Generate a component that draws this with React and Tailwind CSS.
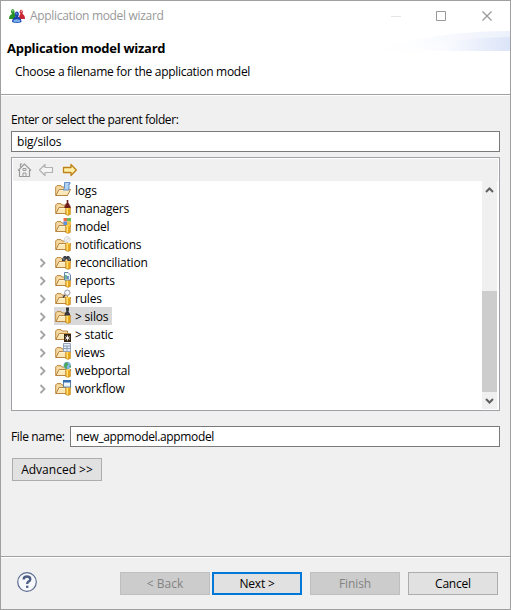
const FONT = "font-['Open_Sans','Noto_Sans',sans-serif]";

function AppIcon() {
  return (
    <svg width="16" height="14" viewBox="0 0 16 14">
      <path d="M0 10Q0 6 3 5L2 3Q2 0 4 0Q6 1 5.500 4Q7 6 6 10Z" fill="#269322" />
      <path d="M10 10Q10 6 11.500 5L10.500 3Q11 0 13 1Q14.500 2 13.500 5Q16 6 16 10Z" fill="#c92433" />
      <circle cx="3.700" cy="1.700" r=".9" fill="#91d98e" />
      <circle cx="12.400" cy="2.300" r=".9" fill="#f3a2a2" />
      <path d="M3 13Q3 9 6.500 7.500Q5 5 6.500 3Q8 1.700 9.500 3.500Q10.500 6 9 7.500Q12.500 9 12.500 13Q8 15 3 13Z" fill="#1b45ae" />
      <ellipse cx="7.800" cy="11.800" rx="3.500" ry="1.500" fill="#79adee" />
      <circle cx="7.500" cy="4.700" r="1" fill="#638bd4" />
    </svg>
  );
}

const BADGES = {
  logs: (
    <path d="M9.500 .500h5.500v1.500h-1v6H8q1.800-1 1.500-4z" fill="#b4d3f4" stroke="#5585bd" strokeWidth=".9" />
  ),
  managers: <path d="M10.500 5.500V4L11.700 3V0H13.300V3L14.500 4V5.500H15.500V8H9.500V5.500Z" fill="#6d1e1b" />,
  model: (
    <g>
      <path d="M8.500 0h3.500v3.500H8.500z" fill="#ec6c50" />
      <path d="M12 0h4v3.500h-4z" fill="#68b956" />
      <path d="M8.500 3.500h3.500V7H8.500z" fill="#5b91de" />
      <path d="M12 3.500h4V7h-4z" fill="#f0bd3d" />
    </g>
  ),
  notifications: <path d="M9.500 6Q8.500 1 12 .5Q15 1 15.500 4Q14 7 9.500 6ZM10.500 5L14 2" fill="#f2f2f2" stroke="#cfcfcf" strokeWidth=".9" />,
  reconciliation: (
    <g>
      <path d="M7 5L9 2H11L11.500 3L12 2H14L16 5V7H13L12 5H11L10 7H7Z" fill="#3b4049" />
      <path d="M8 5h1.500M13.500 5h1.500" stroke="#a5adb9" />
    </g>
  ),
  reports: (
    <g>
      <path d="M9.500 .500h3.500l2.500 2.500v5H9.500z" fill="#eef7ff" stroke="#54779a" strokeWidth=".9" />
      <path d="M11 3v4" stroke="#25955b" strokeWidth="1.300" />
      <path d="M13 4v3" stroke="#2a5fae" strokeWidth="1.300" />
    </g>
  ),
  rules: (
    <g>
      <path d="M10 5L8 7.500" stroke="#484848" strokeWidth="1.500" />
      <circle cx="12.300" cy="2.700" r="2.700" fill="#f0f6fb" stroke="#9999a0" />
    </g>
  ),
  silos: <path d="M11 -.500H14V2.500L13.300 3L15 6V7.500H9.500V6L11.500 3L11 2.500Z" fill="#33373d" />,
  views: (
    <path d="M8.500 -.500h7v8h-7zM8.500 2h7M8.500 4.500h7M12 2v5" fill="#e2ecf7" stroke="#8a9bb3" strokeWidth=".9" />
  ),
  webportal: (
    <g>
      <circle cx="12.200" cy="3.500" r="3.700" fill="#82b6e4" />
      <path d="M9 3Q10 0 12 0L13.500 2.500L11.500 4.500L12.500 7Q9 7 9 3ZM14 4l2-1v3z" fill="#4ca663" />
    </g>
  ),
  workflow: (
    <g>
      <path d="M8.500 .500h7v6.500h-7z" fill="#edf5fc" stroke="#4e79a5" strokeWidth=".9" />
      <path d="M8 0h8v2.500H8z" fill="#346eaf" />
    </g>
  ),
};

function FolderIcon({ name }) {
  return (
    <svg width="18" height="18" viewBox="-1 -1 18 18" className="shrink-0">
      <path d="M.700 13.500V5L2 3.600H6L7 5H12.500V13.500Z" fill="#f6d9a0" stroke="#bd8842" />
      <path d="M1 13.500L4 7.500H15.500L12.500 13.500Z" fill="#fbe8b8" stroke="#b98543" />
      <path d="M4.500 8.600H13.500" stroke="#fff6d9" strokeWidth=".8" />
      {name !== "logs" && name !== "static" && (
        <g>
          <path d="M10.700 7.500H15.300V14.500Q13 16 10.700 14.500Z" fill="#eca91e" stroke="#c27f14" strokeWidth=".7" />
          <path d="M12.300 8V14.500" stroke="#ffe17a" strokeWidth="1.400" />
          <ellipse cx="13" cy="7.700" rx="2.300" ry=".8" fill="#ffd55c" />
        </g>
      )}
      {name === "static" && (
        <g>
          <path d="M9 8h7v8H9z" fill="#382611" />
          <path d="M12.500 9.500v5M10.300 10.700l4.400 2.600M14.700 10.700l-4.400 2.600" stroke="#fff" strokeWidth=".9" />
        </g>
      )}
      {BADGES[name]}
    </svg>
  );
}

const ROWS = [
  ["logs", "logs", false],
  ["managers", "managers", false],
  ["model", "model", false],
  ["notifications", "notifications", false],
  ["reconciliation", "reconciliation", true],
  ["reports", "reports", true],
  ["rules", "rules", true],
  ["silos", "> silos", true],
  ["static", "> static", true],
  ["views", "views", true],
  ["webportal", "webportal", true],
  ["workflow", "workflow", true],
];

function Row({ icon, label, expandable }) {
  const selected = icon === "silos";
  return (
    <div className="flex h-[18px] items-center pl-[25px]">
      <div className="flex w-4 shrink-0">
        {expandable && (
          <svg width="8" height="10" viewBox="0 0 8 10" className="ml-[1px] mt-[2px]">
            <path d="M1.500 1L5.500 5L1.500 9" fill="none" stroke="#a6a6a6" strokeWidth="1.900" />
          </svg>
        )}
      </div>
      <div className={"flex h-[18px] items-center pr-1 " + (selected ? "bg-[#d9d9d9]" : "")}>
        <FolderIcon name={icon} />
        <span className="ml-[3px] pt-px leading-[18px] tracking-[-0.2px]">{label}</span>
      </div>
    </div>
  );
}

const BTN = "flex h-[23px] w-[90px] items-center justify-center border ";

export default function App() {
  return (
    <div className={FONT + " flex h-[610px] w-[511px] flex-col overflow-hidden whitespace-nowrap border border-[#a0a0a0] bg-[#f0f0f0] text-[12px] text-black"}>
      <header className="flex h-[30px] shrink-0 items-center bg-white pl-2 text-[#999]">
        <AppIcon />
        <span className="ml-[5px] tracking-[-0.32px]">Application model wizard</span>
        <svg className="ml-auto mr-[16px] mt-[-1px]" width="103" height="12" viewBox="0 0 103 12" fill="none">
          <path d="M0 6.500h10" stroke="#e5e5e5" />
          <path d="M45.500 1.500h9v9h-9z" stroke="#999" />
          <path d="M91.500 1.500l9 9M100.500 1.500l-9 9" stroke="#999" strokeWidth="1.300" />
        </svg>
      </header>
      <section className="flex h-[64px] shrink-0 justify-between border-b border-[#a0a0a0] bg-white">
        <div className="pl-[6px] pt-[8px]">
          <h1 className="text-[13px] font-bold leading-[18px] tracking-[-0.28px]">Application model wizard</h1>
          <p className="mt-[6px] pl-2 leading-[18px] tracking-[-0.29px]">Choose a filename for the application model</p>
        </div>
        <svg width="140" height="20" viewBox="0 0 140 20">
          <defs>
            <linearGradient id="swoosh">
              <stop offset="0" stopColor="#fff" />
              <stop offset=".35" stopColor="#fafbff" />
              <stop offset="1" stopColor="#d9e2f7" />
            </linearGradient>
          </defs>
          <path d="M0 20Q65 0 140 0V20Z" fill="url(#swoosh)" opacity=".5" />
          <path d="M40 20Q78 7 140 6V20Z" fill="url(#swoosh)" opacity=".85" />
        </svg>
      </section>
      <main className="flex h-[461px] shrink-0 flex-col px-[10px] shadow-[inset_0_1px_0_#fff]">
        <label className="mt-[15px] h-[18px] leading-[19px] tracking-[-0.43px]">Enter or select the parent folder:</label>
        <div className="mt-[3px] flex h-[21px] items-center border border-[#7a7a7a] bg-white pl-[5px] tracking-[-0.2px]">big/silos</div>
        <div className="mt-[5px] flex h-[254px] flex-col border border-[#a0a0a7] bg-white p-px">
          <div className="flex h-[22px] shrink-0 items-center bg-[#f0f0f0] pl-[4px]">
            <svg width="60" height="16" viewBox="0 0 60 16" fill="none">
              <path d="M2.500 8v6.500h10V8M1 8.500L7.500 2L14 8.500M3.500 5V2h2" stroke="#9b9b9b" strokeWidth="1.200" />
              <path d="M6 14.500V11h3v3.500M6 6.500h3v2H6z" stroke="#9b9b9b" />
              <path d="M22.500 8L28 2.500v3h7.500v5H28v3z" fill="#f5f5f5" stroke="#b2b2b2" strokeWidth="1.200" strokeLinejoin="round" />
              <path d="M59.300 8L54 2.500v3h-7.500v5H54v3z" fill="#fff0a8" stroke="#be8018" strokeWidth="1.300" strokeLinejoin="round" />
            </svg>
          </div>
          <div className="flex h-[228px] justify-between">
            <div>
              {ROWS.map(([icon, label, expandable]) => (
                <Row key={icon} icon={icon} label={label} expandable={expandable} />
              ))}
            </div>
            <div className="mr-px flex w-[15px] flex-col items-center bg-[#f0f0f0]">
              <svg className="mt-[5px]" width="9" height="8" viewBox="0 0 9 8">
                <path d="M1 6L4.500 2.500L8 6" fill="none" stroke="#606060" strokeWidth="2" />
              </svg>
              <div className="mt-[97px] h-[101px] w-full bg-[#cdcdcd]" />
              <svg className="mt-[5px]" width="9" height="8" viewBox="0 0 9 8">
                <path d="M1 2L4.500 5.500L8 2" fill="none" stroke="#606060" strokeWidth="2" />
              </svg>
            </div>
          </div>
        </div>
        <div className="mt-[15px] flex h-[21px] items-center">
          <label className="w-[59px] tracking-[-0.35px]">File name:</label>
          <div className="flex h-[21px] flex-1 items-center border border-[#7a7a7a] bg-white pl-[5px] tracking-[-0.35px]">new_appmodel.appmodel</div>
        </div>
        <button className={BTN + "ml-px mt-[11px] border-[#adadad] bg-[#e1e1e1]"}>Advanced &gt;&gt;</button>
      </main>
      <footer className="flex h-[53px] shrink-0 border-t border-[#a0a0a0] pt-[15px] shadow-[inset_0_1px_0_#fff]">
        <svg className="ml-4" width="20" height="20" viewBox="0 0 20 20" fill="none">
          <circle cx="10" cy="10" r="9.300" fill="#f6f8fc" stroke="#5b6c8f" strokeWidth="1.200" />
          <path d="M6.700 7.500Q6.700 4.500 10 4.500Q13.300 4.500 13.300 7.200Q13.300 8.600 11.500 9.600Q10.200 10.400 10.200 12" stroke="#4d6084" strokeWidth="2.400" />
          <path d="M9 13.700h2.400v2.200H9z" fill="#4d6084" />
        </svg>
        <button className={BTN + "ml-[83px] border-[#bfbfbf] bg-[#ccc] text-[#838383]"}>&lt; Back</button>
        <button className={BTN + "ml-[2px] border-2 border-[#0078d7] bg-[#e1e1e1] tracking-[-0.2px]"}>Next &gt;</button>
        <button className={BTN + "ml-[8px] border-[#bfbfbf] bg-[#ccc] tracking-[-0.1px] text-[#838383]"}>Finish</button>
        <button className={BTN + "ml-[8px] border-[#adadad] bg-[#e1e1e1] tracking-[-0.2px]"}>Cancel</button>
      </footer>
    </div>
  );
}
